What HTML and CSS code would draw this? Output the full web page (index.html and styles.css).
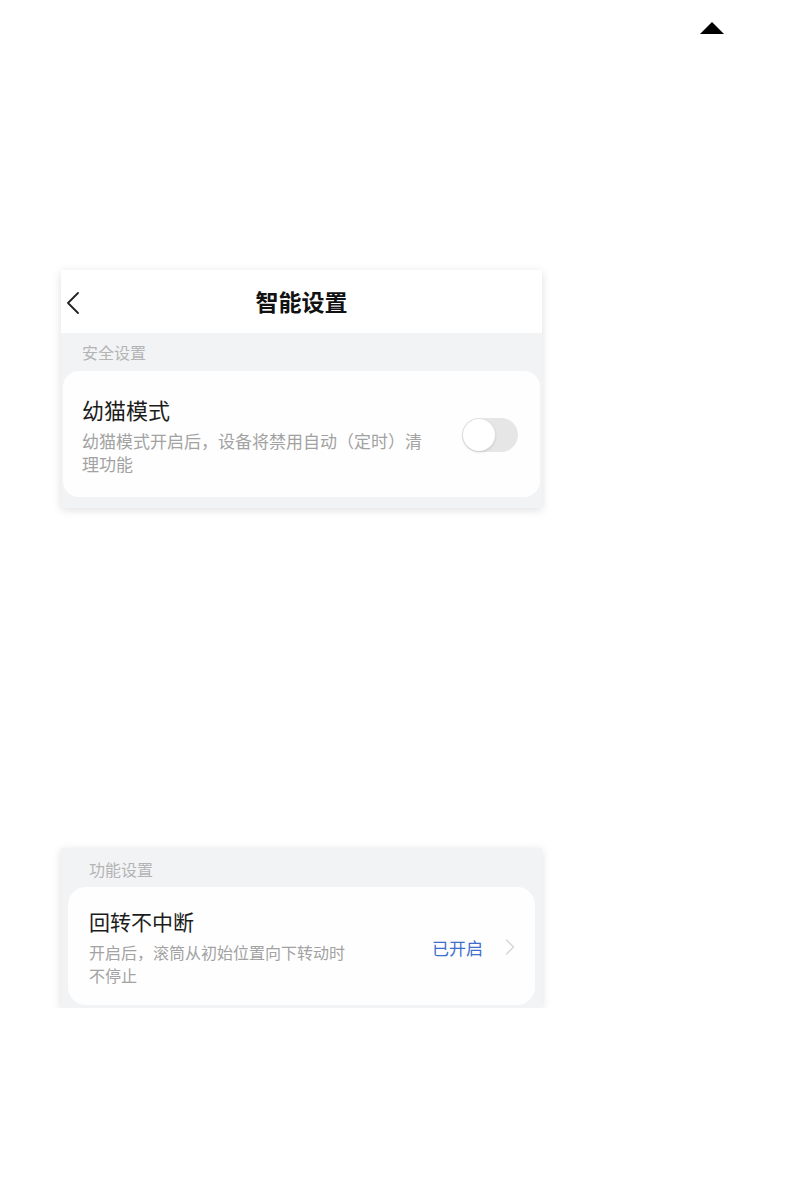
FILE: index.html
```html
<!DOCTYPE html>
<html lang="zh-CN">
<head>
    <meta charset="UTF-8">
    <meta name="viewport" content="width=device-width, initial-scale=1.0">
    <title>智能设置</title>
    <link rel="stylesheet" href="styles.css">
</head>
<body>

    <div class="topbar">
        <span class="caret-up"></span>
    </div>

    <!-- first shot: header + kitten mode -->
    <div class="shot shot-first">
        <div class="nav">
            <svg class="back" width="14" height="22" viewBox="0 0 14 22">
                <path d="M12 1 L2 11 L12 21" fill="none" stroke="#222" stroke-width="1.8" stroke-linecap="round" stroke-linejoin="round"/>
            </svg>
            <h1 class="nav-title">智能设置</h1>
        </div>
        <div class="group">
            <div class="group-label">安全设置</div>
            <div class="item">
                <div class="item-text">
                    <div class="item-title">幼猫模式</div>
                    <div class="item-desc desc-wide">幼猫模式开启后，设备将禁用自动（定时）清理功能</div>
                </div>
                <span class="switch"><span class="knob"></span></span>
            </div>
        </div>
    </div>

    <!-- second shot: function settings -->
    <div class="shot shot-second">
        <div class="group group-second">
            <div class="group-label">功能设置</div>
            <div class="item">
                <div class="item-text">
                    <div class="item-title title-small">回转不中断</div>
                    <div class="item-desc desc-narrow">开启后，滚筒从初始位置向下转动时不停止</div>
                </div>
                <div class="item-value">
                    <span class="status">已开启</span>
                    <svg class="chev" width="10" height="16" viewBox="0 0 10 16">
                        <path d="M1.5 1 L8.5 8 L1.5 15" fill="none" stroke="#d4d4d4" stroke-width="1.3" stroke-linecap="round" stroke-linejoin="round"/>
                    </svg>
                </div>
            </div>
        </div>
    </div>

</body>
</html>
```

FILE: styles.css
```css
body { margin: 0; background: #fff; font-family: "Noto Sans CJK SC", "Noto Sans", sans-serif; color: #222; }

.topbar { height: 22px; padding-top: 22px; display: flex; justify-content: flex-end; padding-right: 70px; }
.caret-up { width: 0; height: 0; border-left: 12px solid transparent; border-right: 12px solid transparent; border-bottom: 12px solid #000; }

.shot { width: 481px; margin-left: 61px; background: #f2f3f5; box-shadow: 0 2px 9px rgba(0, 0, 0, 0.13); }
.shot-first { margin-top: 226px; height: 238px; }
.shot-second { margin-top: 340px; height: 160px; }

.nav { height: 63px; background: #fff; display: flex; align-items: center; justify-content: center; position: relative; }
.back { position: absolute; left: 5px; top: 22px; }
.nav-title { margin: 0; font-size: 23px; font-weight: 700; color: #111; line-height: 1; }

.group { padding: 0 2px; }
.group-label { height: 38px; padding-left: 19px; font-size: 16px; line-height: 38px; color: #b4b4b4; }

.item { background: #fefefe; border-radius: 16px; display: flex; align-items: center; justify-content: space-between; }
.shot-first .item { height: 126px; padding: 0 22px 0 19px; }
.item-title { font-size: 22px; line-height: 30px; color: #1c1c1c; margin-bottom: 5px; }
.item-desc { font-size: 17px; line-height: 23px; color: #a2a2a2; }
.desc-wide { width: 342px; }
.desc-narrow { width: 262px; font-size: 16px; }

.switch { width: 56px; height: 34px; border-radius: 17px; background: #e6e6e6; position: relative; flex-shrink: 0; margin-top: 2px; }
.knob { position: absolute; left: 1px; top: 1px; width: 32px; height: 32px; border-radius: 50%; background: #fff; box-shadow: 0 1px 3px rgba(0, 0, 0, 0.15); }

.group-second { padding: 0 7px; }
.group-second .group-label { height: 39px; line-height: 42px; padding-left: 21px; }
.shot-second .item { height: 118px; padding: 0 20px 0 21px; border-radius: 18px; }
.title-small { font-size: 21px; }
.item-value { display: flex; align-items: center; gap: 22px; margin-top: 2px; }
.status { font-size: 17px; color: #3f6fce; }
.chev { display: block; }
```
